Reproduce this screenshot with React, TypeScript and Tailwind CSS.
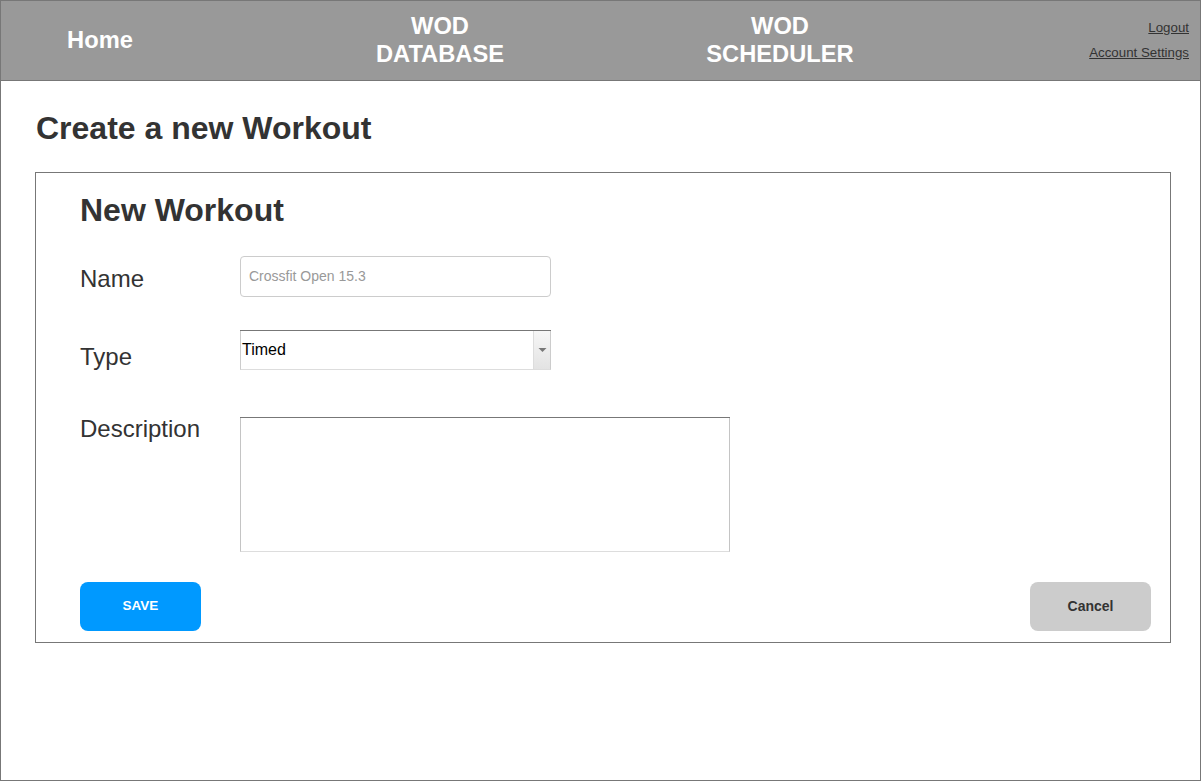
import React from "react";

export default function App() {
  const font = { fontFamily: '"Liberation Sans", Arial, sans-serif' };
  return (
    <div
      className="w-[1201px] h-[781px] border border-[#777] bg-white flex flex-col text-[#333]"
      style={font}
    >
      <header className="h-[80px] shrink-0 bg-[#999] border-b border-[#777] pb-[2px] flex items-center text-white font-bold text-[23.7px] leading-[28px]">
        <div className="w-[198px] text-center">Home</div>
        <div className="w-[141px]" />
        <div className="w-[200px] text-center">
          WOD
          <br />
          DATABASE
        </div>
        <div className="w-[140px]" />
        <div className="w-[200px] text-center">
          WOD
          <br />
          SCHEDULER
        </div>
        <div className="flex-1 flex flex-col items-end gap-[10px] pr-[11px] text-[13.3px] leading-[15px] font-normal text-[#333]">
          <a className="underline" href="#">Logout</a>
          <a className="underline" href="#">Account Settings</a>
        </div>
      </header>
      <main className="flex-1 pt-[29px] pl-[34px] pr-[29px]">
        <h1 className="pl-[1px] text-[32px] leading-[36px] font-bold">Create a new Workout</h1>
        <section className="mt-[26px] border border-[#777] pl-[44px] pr-[19px] pt-[19px] pb-[11px]">
          <h2 className="text-[32px] leading-[36px] font-bold">New Workout</h2>
          <div className="mt-[28px] flex items-start">
            <div className="w-[160px] mt-[9px] text-[24px] leading-[28px]">Name</div>
            <div className="w-[311px] h-[41px] border border-[#ccc] rounded-[4px] flex items-center pl-[8px] text-[14px] text-[#999]">
              Crossfit Open 15.3
            </div>
          </div>
          <div className="mt-[33px] flex items-start">
            <div className="w-[160px] mt-[13px] text-[24px] leading-[28px]">Type</div>
            <div className="w-[311px] h-[40px] border-t border-[#777]">
              <div className="h-full border border-t-0 border-[#ccc] border-b-[#ddd] flex">
                <div className="flex-1 pl-[1px] pt-[10px] text-[16px] leading-[18px] text-black">Timed</div>
                <div className="w-[17px] h-full bg-gradient-to-b from-[#f6f6f6] to-[#e3e3e3] border-l border-[#ddd] flex items-center justify-center">
                  <svg width="9" height="6" viewBox="0 0 9 6">
                    <path d="M0.5 1 L8.5 1 L4.5 5 Z" fill="#777" />
                  </svg>
                </div>
              </div>
            </div>
          </div>
          <div className="mt-[43px] flex items-start">
            <div className="w-[160px] mt-[1px] text-[24px] leading-[28px]">Description</div>
            <div className="mt-[3px] w-[490px] h-[135px] border-t border-[#777]">
              <div className="h-full border border-t-0 border-[#c4c4c4] border-b-[#ddd]" />
            </div>
          </div>
          <div className="mt-[30px] flex justify-between">
            <button className="w-[121px] h-[49px] rounded-[8px] bg-[#0099ff] text-white font-bold text-[13.5px]">
              SAVE
            </button>
            <button className="w-[121px] h-[49px] rounded-[8px] bg-[#ccc] text-[#333] font-bold text-[14px]">
              Cancel
            </button>
          </div>
        </section>
      </main>
    </div>
  );
}
